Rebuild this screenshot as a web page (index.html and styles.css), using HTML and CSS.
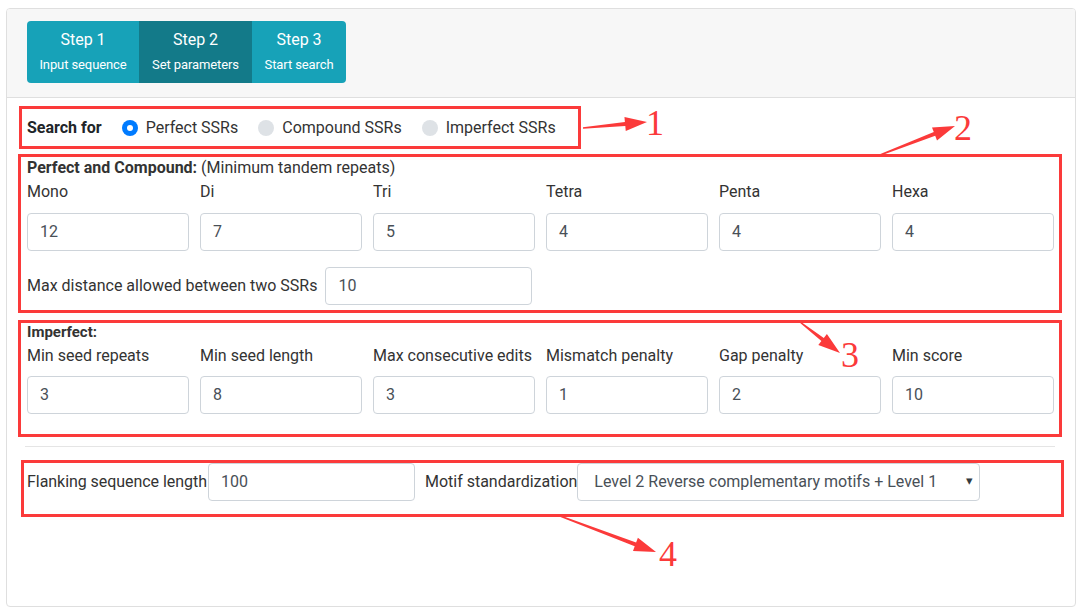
FILE: index.html
```html
<!DOCTYPE html>
<html>
<head>
<meta charset="utf-8">
<link rel="stylesheet" href="styles.css">
</head>
<body>
<div class="card">
  <div class="card-header">
    <div class="steps">
      <div class="step"><div class="step-title">Step 1</div><div class="step-sub">Input sequence</div></div>
      <div class="step active"><div class="step-title">Step 2</div><div class="step-sub">Set parameters</div></div>
      <div class="step"><div class="step-title">Step 3</div><div class="step-sub">Start search</div></div>
    </div>
  </div>
  <div class="card-body">
    <div class="search-row">
      <span class="bold">Search for</span>
      <label class="radio"><span class="dot checked"></span>Perfect SSRs</label>
      <label class="radio"><span class="dot"></span>Compound SSRs</label>
      <label class="radio"><span class="dot"></span>Imperfect SSRs</label>
    </div>

    <div class="section perfect">
      <div class="heading"><span class="bold">Perfect and Compound:</span> (Minimum tandem repeats)</div>
      <div class="grid">
        <div class="field"><div class="lbl">Mono</div><div class="input">12</div></div>
        <div class="field"><div class="lbl">Di</div><div class="input">7</div></div>
        <div class="field"><div class="lbl">Tri</div><div class="input">5</div></div>
        <div class="field"><div class="lbl">Tetra</div><div class="input">4</div></div>
        <div class="field"><div class="lbl">Penta</div><div class="input">4</div></div>
        <div class="field"><div class="lbl">Hexa</div><div class="input">4</div></div>
      </div>
      <div class="inline-row distance">
        <span class="lbl-inline">Max distance allowed between two SSRs</span>
        <div class="input w207">10</div>
      </div>
    </div>

    <div class="section imperfect">
      <div class="heading small bold">Imperfect:</div>
      <div class="grid">
        <div class="field"><div class="lbl">Min seed repeats</div><div class="input">3</div></div>
        <div class="field"><div class="lbl">Min seed length</div><div class="input">8</div></div>
        <div class="field"><div class="lbl">Max consecutive edits</div><div class="input">3</div></div>
        <div class="field"><div class="lbl">Mismatch penalty</div><div class="input">1</div></div>
        <div class="field"><div class="lbl">Gap penalty</div><div class="input">2</div></div>
        <div class="field"><div class="lbl">Min score</div><div class="input">10</div></div>
      </div>
    </div>

    <hr class="divider">

    <div class="inline-row flank">
      <span class="lbl-inline tight">Flanking sequence length</span>
      <div class="input w207">100</div>
      <span class="lbl-inline motif">Motif standardization</span>
      <div class="select">Level 2 Reverse complementary motifs + Level 1</div>
    </div>
  </div>
</div>

<div class="annot">
  <div class="box b1"></div>
  <div class="box b2"></div>
  <div class="box b3"></div>
  <div class="box b4"></div>
  <svg class="arrows" width="1085" height="616" viewBox="0 0 1085 616">
    <polygon points="583.07,128.7 625.3,126.0 625.75,131.0 647,122 624.45,117.1 624.9,122.1 582.93,127.3"/>
    <polygon points="880.25,155.65 935.2,135.8 937.0,140.4 955,126 932.0,127.4 933.8,132.0 879.75,154.35"/>
    <polygon points="799.57,322.55 821.4,341.1 818.3,345.0 840,353 826.9,334.0 823.8,337.9 800.43,321.45"/>
    <polygon points="559.75,516.66 634.7,546.2 633.0,550.9 656,552 637.9,537.7 636.1,542.4 560.25,515.34"/>
  </svg>
  <span class="num n1">1</span>
  <span class="num n2">2</span>
  <span class="num n3">3</span>
  <span class="num n4">4</span>
</div>
</body>
</html>
```

FILE: styles.css
```css
* { box-sizing: border-box; }
html, body { margin: 0; padding: 0; }
body {
  position: relative;
  width: 1085px;
  height: 616px;
  padding: 8px 9px 0 6px;
  font-family: Roboto, "Liberation Sans", sans-serif;
  font-size: 16px;
  line-height: 24px;
  color: #212529;
  background: #fff;
  overflow: hidden;
}
.bold { font-weight: 700; }

.card {
  border: 1px solid #dfdfdf;
  border-radius: 4px;
  height: 599px;
  overflow: hidden;
}
.card-header {
  background: #f7f7f7;
  border-bottom: 1px solid #dfdfdf;
  padding: 12px 20px 13px;
  height: 89px;
}
.steps {
  display: inline-flex;
  border-radius: 4px;
  overflow: hidden;
  height: 62px;
}
.step {
  background: #17a2b8;
  color: #fff;
  display: flex;
  flex-direction: column;
  align-items: center;
  padding: 8px 0 0;
  text-align: center;
  white-space: nowrap;
}
.step:nth-child(1) { width: 112px; }
.step:nth-child(2) { width: 113px; }
.step:nth-child(3) { width: 94px; }
.step.active { background: #137a89; }
.step-title { font-size: 16px; line-height: 22px; }
.step-sub { font-size: 13px; line-height: 20px; margin-top: 4px; letter-spacing: -0.1px; }

.card-body {
  padding: 18px 20px 0;
}
.search-row {
  display: flex;
  align-items: center;
  height: 24px;
}
.search-row .bold { margin-right: 20px; }
.radio {
  display: flex;
  align-items: center;
  margin-right: 20px;
  color: #333;
}
.dot {
  width: 16px;
  height: 16px;
  border-radius: 50%;
  background: #dee2e6;
  margin-right: 8px;
  position: relative;
}
.dot.checked { background: #007bff; }
.dot.checked::after {
  content: "";
  position: absolute;
  left: 5px; top: 5px;
  width: 6px; height: 6px;
  border-radius: 50%;
  background: #fff;
}

.section.perfect { margin-top: 16px; }
.section.imperfect { margin-top: 16px; }
.heading { line-height: 24px; color: #333; }
.heading.small { font-size: 15px; line-height: 22px; }

.grid {
  display: grid;
  grid-template-columns: repeat(6, 162px);
  column-gap: 11px;
}
.lbl { line-height: 24px; margin-bottom: 9px; color: #333; white-space: nowrap; }
.imperfect .lbl { margin-top: 1px; margin-bottom: 8px; }
.input {
  height: 38px;
  border: 1px solid #ced4da;
  border-radius: 4px;
  padding: 0 12px;
  display: flex;
  align-items: center;
  color: #495057;
  background: #fff;
}
.inline-row {
  display: flex;
  align-items: center;
}
.distance { margin-top: 16px; }
.distance .lbl-inline { margin-right: 8px; }
.lbl-inline { color: #333; white-space: nowrap; }
.w207 { width: 207px; }
.lbl-inline.motif { margin-left: 10px; }

.divider {
  border: 0;
  border-top: 1px solid #e5e5e5;
  margin: 32px 0 0;
  height: 0;
  width: 1030px;
  margin-left: -2px;
}
.flank { margin-top: 16px; }
.tight { margin-right: 1px; letter-spacing: -0.05px; }
.select {
  position: relative;
  width: 403px;
  height: 38px;
  border: 1px solid #ced4da;
  border-radius: 4px;
  padding: 0 16px;
  display: flex;
  align-items: center;
  color: #495057;
}
.select::after {
  content: "\25BE";
  position: absolute;
  right: 6px;
  top: 5px;
  font-size: 13px;
  color: #343a40;
}

.annot { position: absolute; left: 0; top: 0; width: 1085px; height: 616px; pointer-events: none; }
.box { position: absolute; border: 3px solid #fb3a3a; }
.b1 { left: 19px; top: 106px; width: 562px; height: 43px; }
.b2 { left: 18px; top: 154px; width: 1044px; height: 159px; }
.b3 { left: 18px; top: 320px; width: 1044px; height: 117px; }
.b4 { left: 21px; top: 460px; width: 1043px; height: 57px; }
.arrows { position: absolute; left: 0; top: 0; }
.arrows polygon { fill: #fb3a3a; }
.num {
  position: absolute;
  font-family: "Liberation Serif", "DejaVu Serif", serif;
  font-size: 36px;
  line-height: 36px;
  color: #fb3a3a;
}
.n1 { left: 646px; top: 105px; }
.n2 { left: 954px; top: 110px; }
.n3 { left: 841px; top: 337px; }
.n4 { left: 659px; top: 536px; }
```
